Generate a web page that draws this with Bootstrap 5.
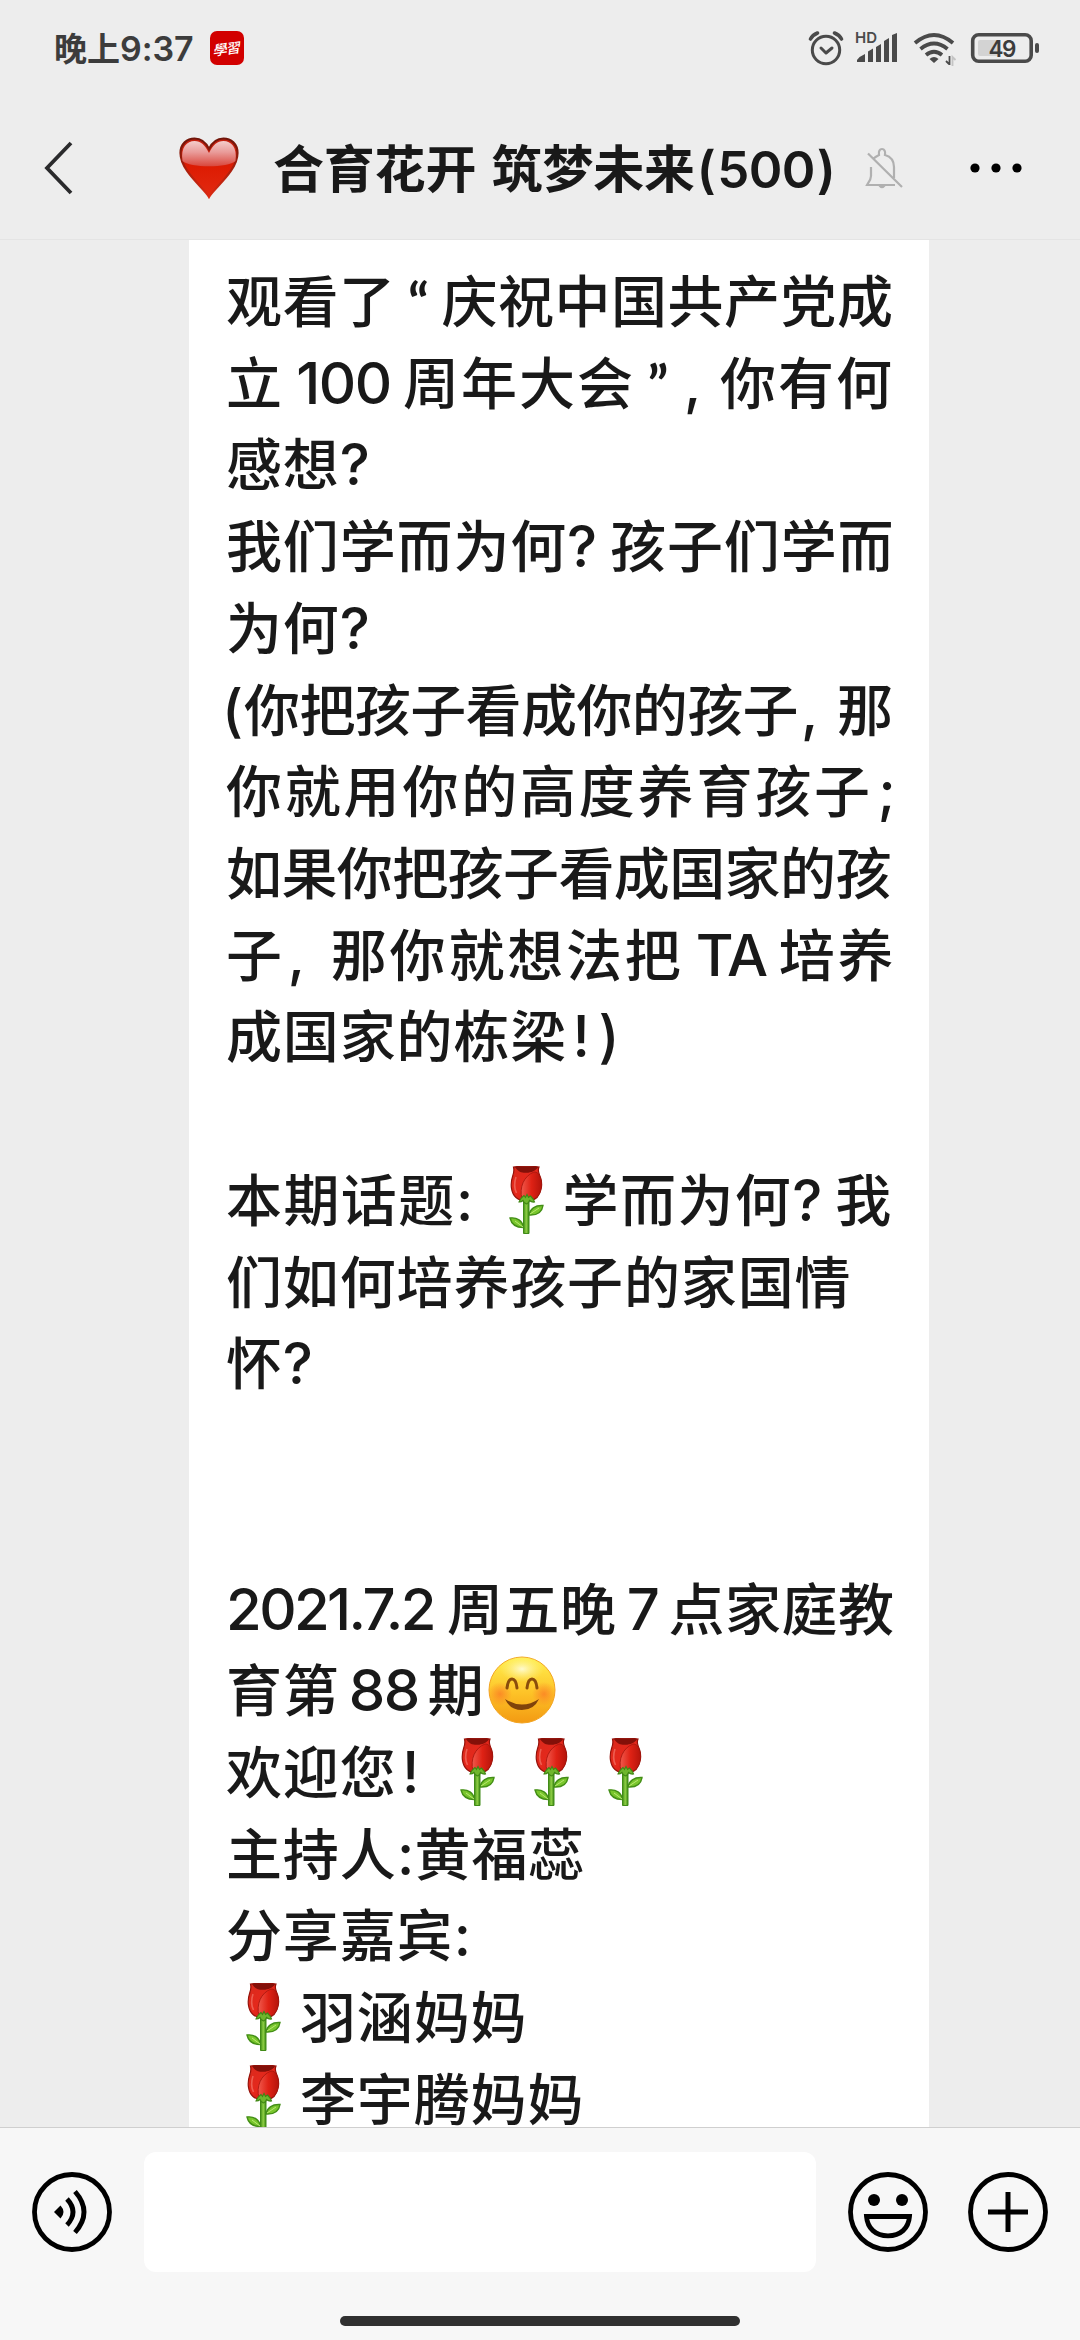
<!DOCTYPE html>
<html lang="zh-CN">
<head>
<meta charset="utf-8">
<meta name="viewport" content="width=device-width, initial-scale=1">
<title>合育花开 筑梦未来</title>
<link href="https://cdn.jsdelivr.net/npm/bootstrap@5.3.0/dist/css/bootstrap.min.css" rel="stylesheet">
<style>
  body { background: #ededed; color: #191919; font-family: "Noto Sans CJK SC", sans-serif; }
  .screen { width: 1080px; height: 2340px; }
  .num { font-family: Inter, "Noto Sans CJK SC", sans-serif; line-height: 1; }

  .statusbar { height: 96px; padding: 0 41px 0 54px; color: #3c3c3c; }
  .clock { font-size: 33px; font-weight: 700; line-height: 48px; margin-top: -3px; }
  .clock .num { font-size: 34px; letter-spacing: -.1px; font-weight: 600; }
  .study { width: 34px; height: 34px; margin-left: 17px; border-radius: 7px; background: #d20000; color: #fff; font-size: 14px; font-weight: 500; letter-spacing: -1px; }
  .study span { transform: skewX(-14deg) rotate(-8deg); line-height: 1; }

  .titlebar { height: 144px; padding: 1px 58px 0 43px; border-bottom: 1px solid #e4e4e4; }
  .title { font-size: 51px; font-weight: 700; line-height: 80px; white-space: pre; margin-top: -4px; }
  .title .cjk { letter-spacing: -.2px; word-spacing: 4px; }
  .title .num { font-size: 51px; font-weight: 600; letter-spacing: -.6px; }
  .title .brace { margin: 0 2px; }
  .heart { margin-left: 104px; }
  .heading { margin-left: 34px; width: 558px; }
  .bell { margin-left: 34px; }

  .chat { height: 1887px; }
  .bubble { width: 740px; margin-left: 189px; padding: 17px 0 0 37px; }
  .bubble .line { height: 81.73px; line-height: 81.73px; font-size: 56px; font-weight: 500; letter-spacing: .85px; white-space: nowrap; }
  .line.snug { letter-spacing: .5px; }
  .line.tight { letter-spacing: -.6px; }
  .line.open { letter-spacing: 1.4px; }
  .line.loose { letter-spacing: 2px; }
  .line.wide { letter-spacing: 2.8px; }
  .line svg { vertical-align: -13px; }
  .p, .digits { display: inline-block; text-align: center; font-family: Inter, sans-serif; font-weight: 500; font-size: 57px; line-height: 1; letter-spacing: 0; }
  .digits { font-size: 58px; font-weight: 500; letter-spacing: -1.500px; }
  .quote { font-family: Lato, sans-serif; font-weight: 700; font-size: 54px; }
  .w18 { width: 18px; } .w28 { width: 28px; } .w39 { width: 39px; } .w46 { width: 46px; }
  .w52 { width: 52px; } .w88 { width: 88px; } .w95 { width: 95px; } .w119 { width: 119px; } .w222 { width: 221px; }
  .date { letter-spacing: -2.600px; text-align: left; }
  .after { margin-right: 15px; }
  .open-brace { margin: 0 4px 0 -4px; }
  .comma { text-align: left; padding-left: 3px; }
  .flower { width: 74px; height: 68px; }

  .inputbar { height: 213px; padding: 24px 32px 0; background: #f7f7f7; border-top: 1px solid #cfcfcf; }
  .field { width: 672px; height: 120px; border: 0; border-radius: 12px; background: #fff; margin: 0 32px; }
  .homebar { width: 400px; height: 10px; border-radius: 5px; background: #303030; margin-top: 44px; }
</style>
</head>
<body>
<svg width="0" height="0" class="position-absolute">
  <defs>
    <linearGradient id="petal" x1="0" x2="1" y1="0" y2="1"><stop offset="0" stop-color="#d92a1c"/><stop offset=".5" stop-color="#e5281c"/><stop offset="1" stop-color="#b80f08"/></linearGradient>
    <linearGradient id="petal2" x1="0" x2="1" y1="0" y2="0"><stop offset="0" stop-color="#f0594c"/><stop offset=".5" stop-color="#df2215"/><stop offset="1" stop-color="#b5140b"/></linearGradient>
    <linearGradient id="stem"><stop offset="0" stop-color="#3d8a14"/><stop offset=".5" stop-color="#8fcf45"/><stop offset="1" stop-color="#3d8a14"/></linearGradient>
  </defs>
  <symbol id="rose" viewBox="0 0 74 68">
    <path d="M34.500 33h5.500v34.500h-5.500z" fill="url(#stem)" stroke="#418b18" stroke-width="1"/>
    <path d="M40 49c1-6 6-10 14-9.500-1 7-6 10-14 9.500z" fill="#79c62c" stroke="#438e17" stroke-width="1.400"/>
    <path d="M34.500 61.500c-8 0-12-3-13.500-9.500 7-1 12.500 3 13.500 9.500z" fill="#79c62c" stroke="#438e17" stroke-width="1.400"/>
    <path d="M41 48l9-6M34 61l-8-6" stroke="#b9e873" stroke-width="1"/>
    <path d="M24.500 1c1 4 .3 6-.8 9-2.700 8-1.700 17 3.300 21.500 5 4.500 16 4.500 21 0 5-6 5.500-14 3.500-20-1.200-4-3.500-6-1.500-10.500-6-1-19-1-25.500 0z" fill="url(#petal)" stroke="#941109" stroke-width="1.200"/>
    <path d="M26 1c3 5 7 6 11.500 5.800C42 6.600 47 5 49 1 42 .3 33 .3 26 1z" fill="#831009"/>
    <path d="M45 6c-10 4-15 15-12 27 7 2 13 .5 16-3 5-7 4-16 1.500-20-1-3-2.500-4-5.500-4z" fill="url(#petal2)" stroke="#a3150c" stroke-width=".8"/>
    <path d="M27 11c-2 6-1.500 12 .5 16" fill="none" stroke="#f27568" stroke-width="1.600" opacity=".7"/>
    <path d="M30 36c1-3 3-5 5-6.500l1.500 2 1.500-3 1.500 3 2-1.500c2 2 3.500 4 4 6-2 .3-4-.5-5-1.500-.5 2-1.500 3-3 3.500-2-.5-3-2-3.500-3.500-1 1-2.500 1.700-4 1.500z" fill="#6fb62d" stroke="#3f8714" stroke-width="1.100"/>
  </symbol>
</svg>

<main class="screen d-flex flex-column overflow-hidden">
  <div class="statusbar d-flex align-items-center flex-shrink-0">
    <div class="clock">晚上<span class="num">9:37</span></div>
    <div class="study d-flex align-items-center justify-content-center"><span>學習</span></div>
    <svg class="ms-auto" width="232" height="40" viewBox="806 28 232 40" fill="none" stroke="#4a4a4a">
      <circle cx="825" cy="50" r="13.700" stroke-width="3"/>
      <path d="M820 48l5 5 6-5" stroke-width="3" stroke-linecap="round" stroke-linejoin="round"/>
      <path d="M809.500 39q2-4 7-6M840.500 39q-2-4-7-6" stroke-width="3.600" stroke-linecap="round"/>
      <text x="854" y="43" font-family="Inter, sans-serif" font-size="15" font-weight="600" fill="#4a4a4a" stroke="none">HD</text>
      <g fill="#4a4a4a" stroke="none">
        <path d="M856 62v-2q3-4 8-6v8zM867 62V51.500l5-3V62zM875 62V47l5-3v18zM883 62V41l5-3v24zM891 62V35l5-2v29z"/>
        <path d="M933 63l-4.500-4q4.500-4 9 0z"/>
      </g>
      <path d="M914 43Q933 27 952 43M919.500 49Q933 38 946.500 49M925 55Q933 48.500 941 55" stroke-width="3.800"/>
      <path d="M948.500 56v9M948 64l-3-3" stroke-width="1.800"/>
      <path d="M951.500 66v-9l3 3" stroke="#c4c4c4" stroke-width="1.800"/>
      <rect x="977" y="40" width="20" height="16" rx="2" fill="#d3d3d3" stroke="none"/>
      <rect x="971.700" y="34.700" width="58.500" height="26.600" rx="6" stroke-width="3.600"/>
      <rect x="1034" y="43" width="4" height="10" rx="2" fill="#4a4a4a" stroke="none"/>
      <text x="987.500" y="56.500" font-family="Inter, sans-serif" font-size="22.500" font-weight="600" fill="#3c3c3c" stroke="none" textLength="28">49</text>
    </svg>
  </div>

  <header class="titlebar d-flex align-items-center flex-shrink-0">
    <svg width="32" height="54" viewBox="0 0 32 54" fill="none" stroke="#2a2a2c" stroke-width="3.800"><path d="M28 2L4 27l24 25"/></svg>
    <svg class="heart" width="60" height="62" viewBox="0 0 60 62">
      <defs>
        <linearGradient id="hb" x2="0" y2="1"><stop offset="0" stop-color="#c02011"/><stop offset=".5" stop-color="#dd1c03"/><stop offset="1" stop-color="#e22a12"/></linearGradient>
        <linearGradient id="hs" x2="0" y2="1"><stop offset="0" stop-color="#f3cdcb"/><stop offset=".45" stop-color="#e99a98"/><stop offset="1" stop-color="#d9473c"/></linearGradient>
        <linearGradient id="he" x2="0" y2="1"><stop offset="0" stop-color="#701509"/><stop offset="1" stop-color="#dc2a12"/></linearGradient>
      </defs>
      <path d="M30 60C25 51 1.500 34 1.500 16 1.500 7 8 1.500 15.500 1.500c7 0 11.500 4 14.500 10.500 3-6.500 7.500-10.500 14.500-10.500C52 1.500 58.500 7 58.500 16 58.500 34 35 51 30 60z" fill="url(#hb)" stroke="url(#he)" stroke-width="2.200"/>
      <path d="M3.500 24C1.500 10 8 4 15.500 4 22 4 26 8 30 16 34 8 38 4 44.500 4 52 4 58.500 10 56.500 24 49 31 11 31 3.500 24z" fill="url(#hs)"/>
    </svg>
    <div class="heading title"><span class="cjk">合育花开 筑梦未来</span><span class="num"><span class="brace">(</span>500<span class="brace">)</span></span></div>
    <svg class="bell" width="38" height="42" viewBox="864 145 38 42" fill="none" stroke="#b0b0b0" stroke-width="2.200">
      <path d="M870 165v9c0 4-3 7-4 9h28M872 157c2-2 4-3 6-4-.6-4 .8-6 3-6s3.600 2 3 6c7 2 9 6 9 12v11M867 151.500l34 33.500"/><path d="M879 184q2 2.500 4 0z" fill="#b4b4b4"/>
    </svg>
    <svg class="ms-auto" width="52" height="10" viewBox="0 0 52 10"><circle cx="5" cy="5" r="4.600"/><circle cx="26" cy="5" r="4.600"/><circle cx="47" cy="5" r="4.600"/></svg>
  </header>

  <section class="chat overflow-hidden flex-shrink-0">
    <article class="bubble bg-white">
      <div class="line snug">观看了<span class="p w46 quote">“</span>庆祝中国共产党成</div>
      <div class="line loose">立<span class="digits w119">100</span>周年大会<span class="p w46 quote">”</span><span class="p w39 comma">,</span>你有何</div>
      <div class="line">感想<span class="p w28">?</span></div>
      <div class="line">我们学而为何<span class="p w28 after">?</span>孩子们学而</div>
      <div class="line">为何<span class="p w28">?</span></div>
      <div class="line tight"><span class="p w18 open-brace">(</span>你把孩子看成你的孩子<span class="p w39 comma">,</span>那</div>
      <div class="line wide">你就用你的高度养育孩子<span class="p w28">;</span></div>
      <div class="line tight">如果你把孩子看成国家的孩</div>
      <div class="line wide">子<span class="p w46 comma">,</span>那你就想法把<span class="digits w95">TA</span>培养</div>
      <div class="line">成国家的栋梁<span class="p w28">!</span><span class="p w28">)</span></div>
      <div class="line"></div>
      <div class="line open">本期话题<span class="p w18 after">:</span><svg class="flower"><use href="#rose"/></svg>学而为何<span class="p w28 after">?</span>我</div>
      <div class="line">们如何培养孩子的家国情</div>
      <div class="line">怀<span class="p w28">?</span></div>
      <div class="line"></div>
      <div class="line"></div>
      <div class="line snug"><span class="digits date w222">2021.7.2</span>周五晚<span class="digits w52">7</span>点家庭教</div>
      <div class="line">育第<span class="digits w88">88</span>期<svg class="flower" viewBox="0 0 74 68">
        <defs>
          <linearGradient id="face" x2="0" y2="1"><stop offset="0" stop-color="#fff04f"/><stop offset=".55" stop-color="#fdc227"/><stop offset="1" stop-color="#f39a12"/></linearGradient>
          <radialGradient id="blush"><stop offset="0" stop-color="#fb7a25" stop-opacity=".75"/><stop offset="1" stop-color="#fb7a25" stop-opacity="0"/></radialGradient>
          <radialGradient id="shine"><stop offset="0" stop-color="#fffde0" stop-opacity=".9"/><stop offset="1" stop-color="#fff58a" stop-opacity="0"/></radialGradient>
        </defs>
        <circle cx="37" cy="34" r="33" fill="url(#face)" stroke="#f3a523" stroke-width="1"/>
        <ellipse cx="37" cy="13" rx="22" ry="13" fill="url(#shine)"/>
        <circle cx="15" cy="38" r="12" fill="url(#blush)"/><circle cx="59" cy="38" r="12" fill="url(#blush)"/>
        <path d="M22 32q1-9 5-9t5 9M42 32q1-9 5-9t5 9" fill="none" stroke="#8a4d0c" stroke-width="3" stroke-linecap="round"/>
        <path d="M20 43q17 11 34 0-5 11-17 11T20 43z" fill="#80430b"/>
      </svg></div>
      <div class="line">欢迎您<span class="p w28">!</span><span class="after"></span><svg class="flower"><use href="#rose"/></svg><svg class="flower"><use href="#rose"/></svg><svg class="flower"><use href="#rose"/></svg></div>
      <div class="line">主持人<span class="p w18">:</span>黄福蕊</div>
      <div class="line">分享嘉宾<span class="p w18">:</span></div>
      <div class="line"><svg class="flower"><use href="#rose"/></svg>羽涵妈妈</div>
      <div class="line"><svg class="flower"><use href="#rose"/></svg>李宇腾妈妈</div>
    </article>
  </section>

  <footer class="inputbar flex-shrink-0">
    <div class="d-flex align-items-center">
      <svg width="80" height="80" viewBox="0 0 80 80" fill="none" stroke="#000" stroke-width="4.800">
        <circle cx="40" cy="40" r="37.500"/>
        <path d="M22 40l6.500-6.500q6 6.500 0 13z" fill="#000" stroke="none"/>
        <path d="M35 27q12 13 0 26M43 19.500q18 20.500 0 41" />
      </svg>
      <div class="field"></div>
      <svg width="80" height="80" viewBox="0 0 80 80" fill="none" stroke="#000" stroke-width="4.800">
        <circle cx="40" cy="40" r="37.500"/><circle cx="26" cy="28" r="6" fill="#000" stroke="none"/><circle cx="54" cy="28" r="6" fill="#000" stroke="none"/>
        <path d="M18.500 44.500h43c-1 12-9 19.300-21.500 19.300S19.500 56.500 18.500 44.500z"/>
      </svg>
      <svg class="ms-auto" width="80" height="80" viewBox="0 0 80 80" fill="none" stroke="#000" stroke-width="4.800">
        <circle cx="40" cy="40" r="37.500"/><path d="M20 40h40M40 20v40" stroke-width="5"/>
      </svg>
    </div>
    <div class="homebar mx-auto"></div>
  </footer>
</main>
<script src="https://cdn.jsdelivr.net/npm/bootstrap@5.3.0/dist/js/bootstrap.bundle.min.js"></script>
</body>
</html>
